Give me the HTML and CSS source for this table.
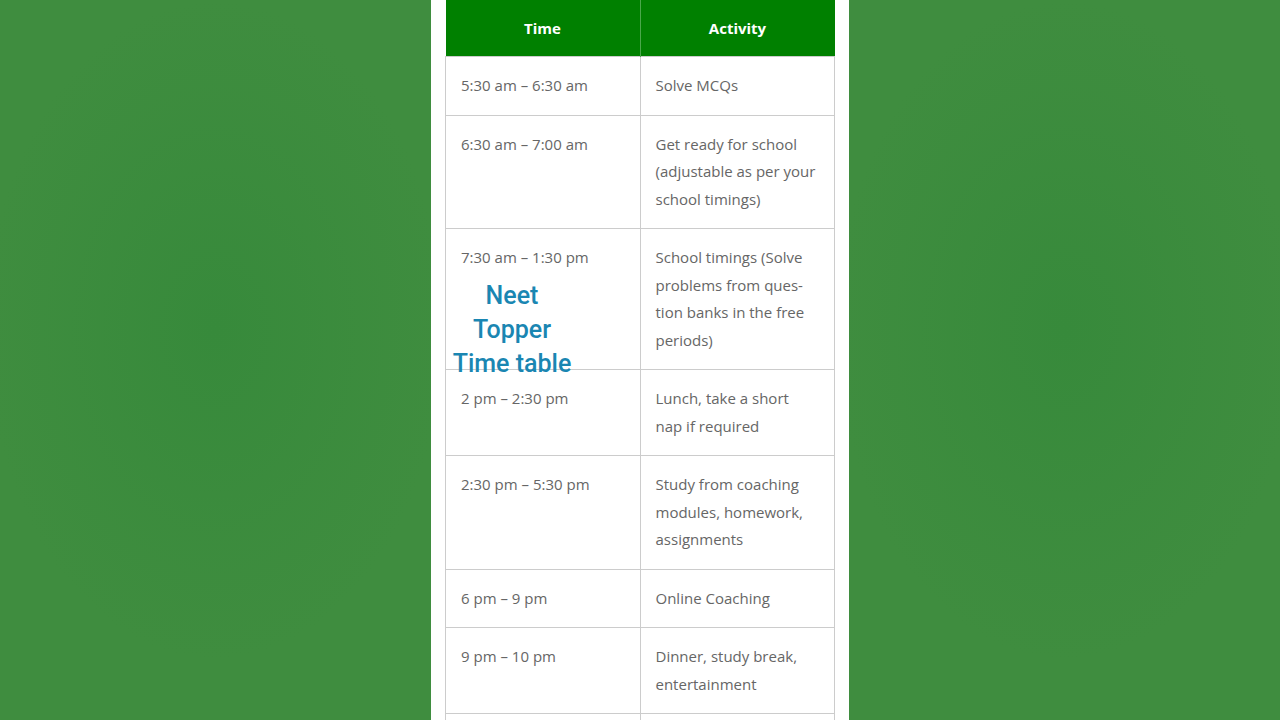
FILE: index.html
```html
<!DOCTYPE html>
<html lang="en">
<head>
<meta charset="utf-8">
<title>Neet Topper Time table</title>
<link rel="stylesheet" href="styles.css">
</head>
<body>
<div class="stage">
  <div class="panel">
    <table class="schedule">
      <thead>
        <tr><th>Time</th><th>Activity</th></tr>
      </thead>
      <tbody>
        <tr><td>5:30 am – 6:30 am</td><td>Solve MCQs</td></tr>
        <tr><td>6:30 am – 7:00 am</td><td>Get ready for school<br>(adjustable as per your<br>school timings)</td></tr>
        <tr><td>7:30 am – 1:30 pm</td><td>School timings (Solve<br>problems from ques-<br>tion banks in the free<br>periods)</td></tr>
        <tr><td>2 pm – 2:30 pm</td><td>Lunch, take a short<br>nap if required</td></tr>
        <tr><td>2:30 pm – 5:30 pm</td><td>Study from coaching<br>modules, homework,<br>assignments</td></tr>
        <tr><td>6 pm – 9 pm</td><td>Online Coaching</td></tr>
        <tr><td>9 pm – 10 pm</td><td>Dinner, study break,<br>entertainment</td></tr>
        <tr class="empty"><td></td><td></td></tr>
      </tbody>
    </table>
    <div class="caption">Neet<br>Topper<br>Time table</div>
  </div>
</div>
</body>
</html>
```
FILE: styles.css
```css
html, body {
  margin: 0;
  padding: 0;
  height: 100%;
  overflow: hidden;
}
body {
  background:
    radial-gradient(ellipse 230px 330px at 215px 330px, #378a3b 0%, rgba(63,141,63,0) 100%),
    radial-gradient(ellipse 230px 330px at 1065px 330px, #378a3b 0%, rgba(63,141,63,0) 100%),
    #3f8d3f;
  font-family: "Open Sans", "Noto Sans", sans-serif;
}
.stage {
  display: flex;
  justify-content: center;
  height: 720px;
}
.panel {
  position: relative;
  width: 418px;
  background: #ffffff;
  padding: 0 14px;
  box-sizing: border-box;
}
.schedule {
  width: 390px;
  border-collapse: collapse;
  table-layout: fixed;
  font-size: 15px;
  color: #666666;
}
.schedule th {
  background: #008000;
  color: #ffffff;
  font-weight: 700;
  font-size: 15px;
  height: 56px;
  padding: 0;
  text-align: center;
  border-left: 1px solid #4aa84a;
}
.schedule th:first-child {
  border-left: none;
}
.schedule td {
  border: 1px solid #cccccc;
  padding: 15px 15px 15px 15px;
  line-height: 27.5px;
  vertical-align: top;
  white-space: nowrap;
}
.schedule .empty td {
  height: 27.5px;
}
.caption {
  position: absolute;
  left: 19px;
  top: 279px;
  width: 124px;
  text-align: center;
  font-family: Roboto, "Noto Sans", sans-serif;
  font-weight: 500;
  font-size: 25px;
  line-height: 34px;
  color: #1a86b2;
}
```
